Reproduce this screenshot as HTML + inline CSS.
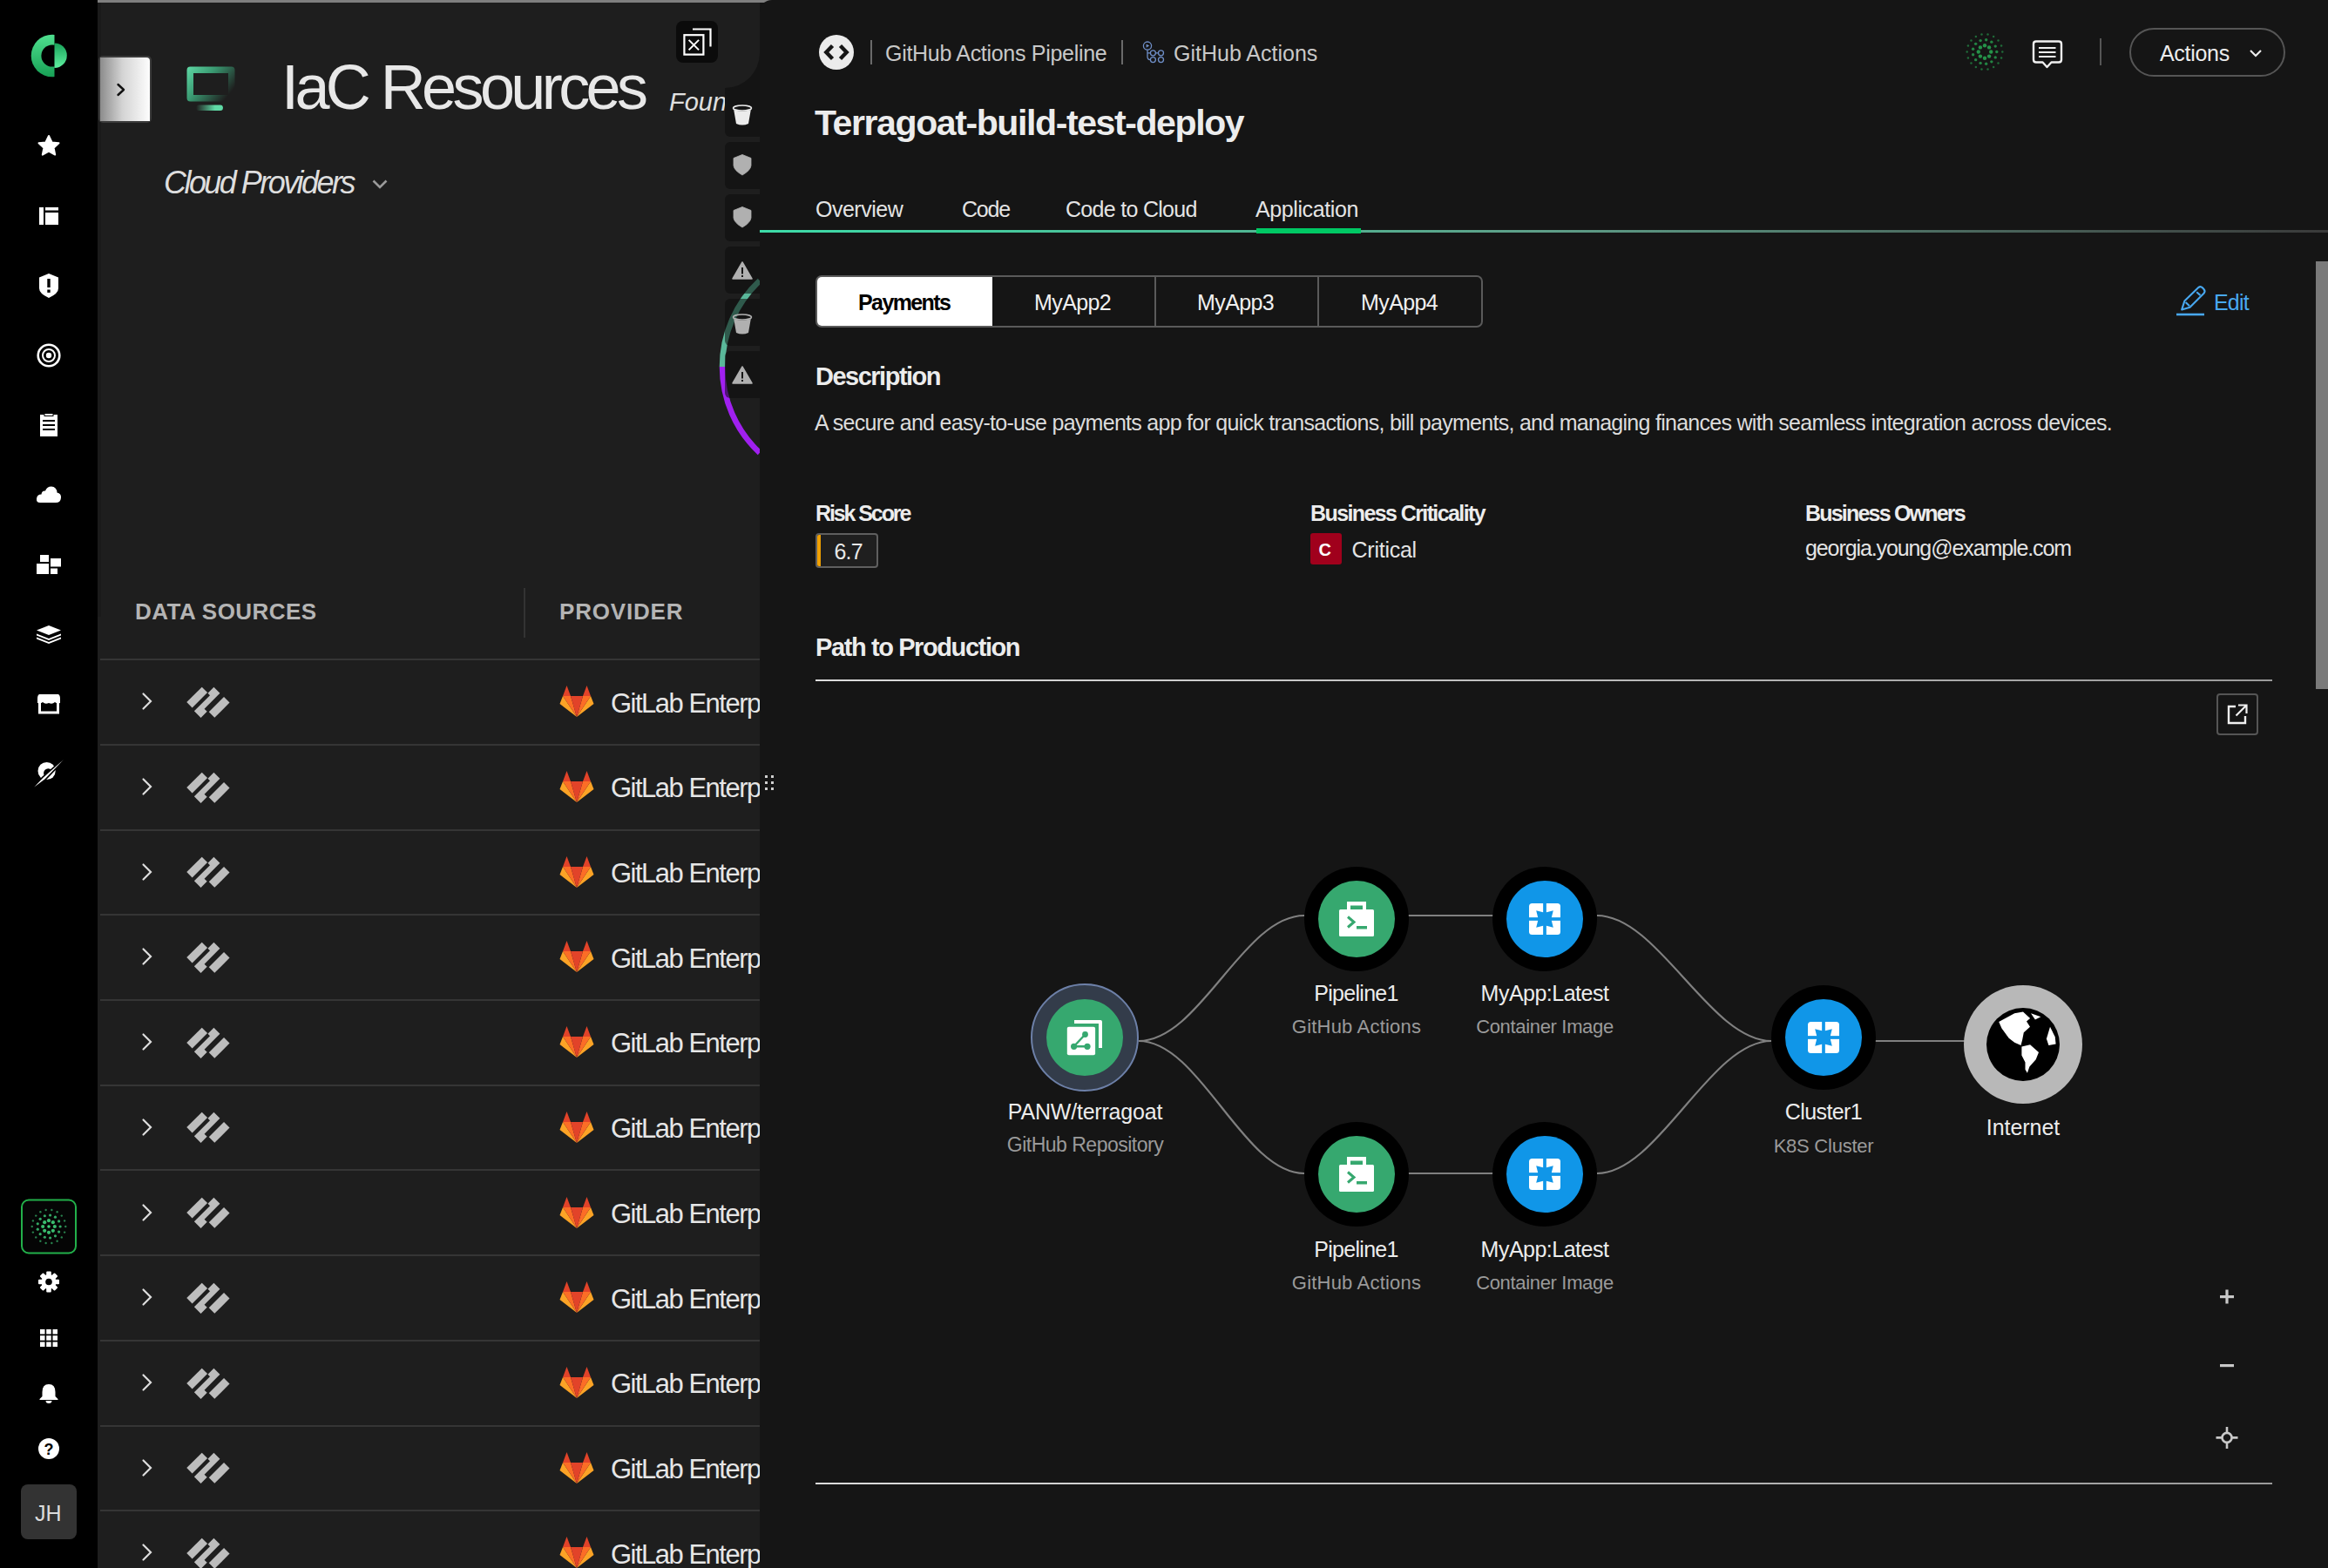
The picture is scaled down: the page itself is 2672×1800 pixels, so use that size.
<!DOCTYPE html>
<html><head><meta charset="utf-8">
<style>
*{box-sizing:border-box;margin:0;padding:0}
html,body{width:2672px;height:1800px;overflow:hidden;background:#151515}
body{position:relative;font-family:"Liberation Sans",sans-serif;color:#e6e6e6}
.a{position:absolute}
.t{position:absolute;white-space:nowrap;line-height:1;font-family:"Liberation Sans",sans-serif}
#side{left:0;top:0;width:112px;height:1800px;background:#000}
</style></head>
<body>
<!-- SIDEBAR -->
<div id="side" class="a">
  <svg class="a" style="left:0;top:0" width="112" height="1800" viewBox="0 0 112 1800">
    <defs>
      <linearGradient id="lg1" x1="0" y1="0" x2="0" y2="1"><stop offset="0" stop-color="#4fe08f"/><stop offset="1" stop-color="#17a055"/></linearGradient>
      <linearGradient id="lg2" x1="0" y1="0" x2="0" y2="1"><stop offset="0" stop-color="#18a259"/><stop offset="1" stop-color="#5ff0a0"/></linearGradient>
    </defs>
    <!-- logo -->
    <defs><clipPath id="lgc"><rect x="30" y="35" width="32.5" height="58"/></clipPath><mask id="lgm"><rect x="0" y="0" width="112" height="120" fill="#fff"/><circle cx="60" cy="64" r="12.6" fill="#000"/></mask></defs>
    <circle cx="60" cy="64" r="24.3" fill="url(#lg1)" clip-path="url(#lgc)" mask="url(#lgm)"/>
    <path d="M62.5,49.4 A14.3,14.3 0 0 1 62.5,78 Z" fill="url(#lg2)"/>
    <!-- star -->
    <path d="M56,156 L59.6,163.4 L67.5,164.3 L61.6,169.7 L63.2,177.6 L56,173.6 L48.8,177.6 L50.4,169.7 L44.5,164.3 L52.4,163.4 Z" fill="#fff" stroke="#fff" stroke-width="2" stroke-linejoin="round"/>
    <!-- layout -->
    <rect x="45" y="238" width="5" height="20" fill="#fff"/>
    <rect x="52" y="238" width="15" height="3.5" fill="#fff"/>
    <rect x="52" y="244" width="15" height="14" fill="#fff"/>
    <!-- shield ! -->
    <path d="M56,314 L67,318.5 L67,331 Q67,337 56,342 Q45,337 45,331 L45,318.5 Z" fill="#fff"/>
    <rect x="54.3" y="320" width="3.4" height="10" fill="#000"/>
    <rect x="54.3" y="332.5" width="3.4" height="3.4" fill="#000"/>
    <!-- target -->
    <circle cx="56" cy="408" r="12.3" fill="none" stroke="#fff" stroke-width="2.6"/>
    <circle cx="56" cy="408" r="7" fill="none" stroke="#fff" stroke-width="2"/>
    <circle cx="56" cy="408" r="3.2" fill="#fff"/>
    <!-- clipboard -->
    <rect x="46" y="476" width="20" height="25" fill="#fff"/>
    <rect x="51" y="474.5" width="10" height="3" fill="#fff" stroke="#000" stroke-width="1"/>
    <rect x="49" y="482" width="14" height="2" fill="#000"/>
    <rect x="49" y="487" width="14" height="2" fill="#000"/>
    <rect x="49" y="492" width="14" height="2" fill="#000"/>
    <!-- cloud -->
    <path d="M46,577 Q41.5,577 42,572.5 Q42.5,567.5 47.5,567.5 Q48,563 52,563.5 Q54,558.5 59,558.6 Q65,559 65.5,565.5 Q70.5,566.5 70,571.5 Q69.5,577 64,577 Z" fill="#fff"/>
    <!-- blocks -->
    <rect x="46" y="637" width="10" height="8" fill="#fff"/>
    <rect x="42" y="647" width="14" height="12" fill="#fff"/>
    <rect x="58" y="641" width="12" height="9.5" fill="#fff"/>
    <rect x="58" y="652.5" width="8" height="6.5" fill="#fff"/>
    <!-- layers -->
    <path d="M56,718 L70,723.5 L56,729 L42,723.5 Z" fill="#fff"/>
    <path d="M42,727.5 L56,733 L70,727.5 L70,729.5 L56,735 L42,729.5 Z" fill="#fff"/>
    <path d="M42,731.5 L56,737 L70,731.5 L70,733.5 L56,739 L42,733.5 Z" fill="#fff"/>
    <!-- store -->
    <path d="M45,797 L67,797 Q69,798 69,802 L69,807 Q65,808 63,806 Q60,809 56,807 Q52,809 49,806 Q47,808 43,807 L43,802 Q43,798 45,797 Z" fill="#fff"/>
    <rect x="44" y="806" width="3" height="13" fill="#fff"/>
    <rect x="65" y="806" width="3" height="13" fill="#fff"/>
    <rect x="44" y="816.5" width="24" height="3" fill="#fff"/>
    <!-- compass/plane -->
    <defs><clipPath id="cpul"><path d="M5.9,934.9 L106.1,841 L106.1,800 L0,800 L0,934.9 Z"/></clipPath></defs>
    <circle cx="53.6" cy="885" r="10.1" fill="#fff"/>
    <circle cx="55.4" cy="887.6" r="5.3" fill="#000" clip-path="url(#cpul)"/>
    <path d="M39.3,903.6 L49.8,892.4 L72.7,872.3 L51.6,894.3 Z" fill="#000" stroke="#000" stroke-width="3.2" stroke-linejoin="round"/>
    <path d="M39.3,903.6 L49.8,892.4 L72.7,872.3 L51.6,894.3 Z" fill="#fff"/>
    <!-- green box -->
    <rect x="25" y="1377.5" width="62" height="61" rx="8" fill="#050505" stroke="#22b04a" stroke-width="2"/>
    <g fill="#3fd07a">
      <circle cx="56" cy="1408" r="1.8"/>
    </g>
    <circle cx="62.84" cy="1408.00" r="2.09" fill="#3fd07a" opacity="0.9"/><circle cx="60.84" cy="1412.84" r="2.09" fill="#3fd07a" opacity="0.9"/><circle cx="56.00" cy="1414.84" r="2.09" fill="#3fd07a" opacity="0.9"/><circle cx="51.16" cy="1412.84" r="2.09" fill="#3fd07a" opacity="0.9"/><circle cx="49.16" cy="1408.00" r="2.09" fill="#3fd07a" opacity="0.9"/><circle cx="51.16" cy="1403.16" r="2.09" fill="#3fd07a" opacity="0.9"/><circle cx="56.00" cy="1401.16" r="2.09" fill="#3fd07a" opacity="0.9"/><circle cx="60.84" cy="1403.16" r="2.09" fill="#3fd07a" opacity="0.9"/><circle cx="69.11" cy="1408.00" r="1.61" fill="#3fd07a" opacity="0.8"/><circle cx="67.61" cy="1414.09" r="1.61" fill="#3fd07a" opacity="0.8"/><circle cx="63.45" cy="1418.79" r="1.61" fill="#3fd07a" opacity="0.8"/><circle cx="57.58" cy="1421.01" r="1.61" fill="#3fd07a" opacity="0.8"/><circle cx="51.35" cy="1420.26" r="1.61" fill="#3fd07a" opacity="0.8"/><circle cx="46.19" cy="1416.69" r="1.61" fill="#3fd07a" opacity="0.8"/><circle cx="43.27" cy="1411.14" r="1.61" fill="#3fd07a" opacity="0.8"/><circle cx="43.27" cy="1404.86" r="1.61" fill="#3fd07a" opacity="0.8"/><circle cx="46.19" cy="1399.31" r="1.61" fill="#3fd07a" opacity="0.8"/><circle cx="51.35" cy="1395.74" r="1.61" fill="#3fd07a" opacity="0.8"/><circle cx="57.58" cy="1394.99" r="1.61" fill="#3fd07a" opacity="0.8"/><circle cx="63.45" cy="1397.21" r="1.61" fill="#3fd07a" opacity="0.8"/><circle cx="67.61" cy="1401.91" r="1.61" fill="#3fd07a" opacity="0.8"/><circle cx="75.28" cy="1408.00" r="1.19" fill="#3fd07a" opacity="0.62"/><circle cx="74.12" cy="1414.60" r="1.19" fill="#3fd07a" opacity="0.62"/><circle cx="70.77" cy="1420.40" r="1.19" fill="#3fd07a" opacity="0.62"/><circle cx="65.64" cy="1424.70" r="1.19" fill="#3fd07a" opacity="0.62"/><circle cx="59.35" cy="1426.99" r="1.19" fill="#3fd07a" opacity="0.62"/><circle cx="52.65" cy="1426.99" r="1.19" fill="#3fd07a" opacity="0.62"/><circle cx="46.36" cy="1424.70" r="1.19" fill="#3fd07a" opacity="0.62"/><circle cx="41.23" cy="1420.40" r="1.19" fill="#3fd07a" opacity="0.62"/><circle cx="37.88" cy="1414.60" r="1.19" fill="#3fd07a" opacity="0.62"/><circle cx="36.72" cy="1408.00" r="1.19" fill="#3fd07a" opacity="0.62"/><circle cx="37.88" cy="1401.40" r="1.19" fill="#3fd07a" opacity="0.62"/><circle cx="41.23" cy="1395.60" r="1.19" fill="#3fd07a" opacity="0.62"/><circle cx="46.36" cy="1391.30" r="1.19" fill="#3fd07a" opacity="0.62"/><circle cx="52.65" cy="1389.01" r="1.19" fill="#3fd07a" opacity="0.62"/><circle cx="59.35" cy="1389.01" r="1.19" fill="#3fd07a" opacity="0.62"/><circle cx="65.64" cy="1391.30" r="1.19" fill="#3fd07a" opacity="0.62"/><circle cx="70.77" cy="1395.60" r="1.19" fill="#3fd07a" opacity="0.62"/><circle cx="74.12" cy="1401.40" r="1.19" fill="#3fd07a" opacity="0.62"/>
    <!-- gear -->
    <g transform="translate(56,1471.5)" fill="#fff">
      <circle r="8.5"/>
      <rect x="-2.8" y="-12" width="5.6" height="24" rx="1"/>
      <rect x="-2.8" y="-12" width="5.6" height="24" rx="1" transform="rotate(45)"/>
      <rect x="-2.8" y="-12" width="5.6" height="24" rx="1" transform="rotate(90)"/>
      <rect x="-2.8" y="-12" width="5.6" height="24" rx="1" transform="rotate(135)"/>
      <circle r="3.8" fill="#000"/>
    </g>
    <!-- grid -->
    <g fill="#fff">
      <rect x="46" y="1526" width="5.5" height="5.5"/><rect x="53.2" y="1526" width="5.5" height="5.5"/><rect x="60.5" y="1526" width="5.5" height="5.5"/>
      <rect x="46" y="1533.2" width="5.5" height="5.5"/><rect x="53.2" y="1533.2" width="5.5" height="5.5"/><rect x="60.5" y="1533.2" width="5.5" height="5.5"/>
      <rect x="46" y="1540.5" width="5.5" height="5.5"/><rect x="53.2" y="1540.5" width="5.5" height="5.5"/><rect x="60.5" y="1540.5" width="5.5" height="5.5"/>
    </g>
    <!-- bell -->
    <path d="M56,1589 Q63.5,1589 63.5,1598 L63.5,1603 L66.5,1606 L66.5,1607 L45.5,1607 L45.5,1606 L48.5,1603 L48.5,1598 Q48.5,1589 56,1589 Z" fill="#fff"/>
    <path d="M52.5,1608 A3.5,3 0 0 0 59.5,1608 Z" fill="#fff"/>
    <!-- help -->
    <circle cx="56" cy="1663" r="12" fill="#fff"/>
    <text x="56" y="1670" text-anchor="middle" font-family="Liberation Sans" font-weight="700" font-size="18" fill="#000">?</text>
    <!-- JH -->
    <rect x="24" y="1704" width="64" height="63" rx="8" fill="#333"/>
  </svg>
  <div class="t" style="left:40px;top:1724.5px;font-size:25px;color:#dcdcdc">JH</div>
</div>

<!-- LEFT PANEL -->
<div class="a" style="left:112px;top:0;width:760px;height:1800px;background:#1e1e1e"></div>
<div class="a" style="left:112px;top:0;width:4px;height:708px;background:#1a1a1a"></div>
<div class="a" style="left:112px;top:0;width:775px;height:3px;background:#7f7f7f"></div>
<div class="a" style="left:113px;top:64px;width:61px;height:77px;background:#3a3a3a;border-radius:5px"></div>
<div class="a" style="left:115px;top:66px;width:57px;height:73px;background:linear-gradient(90deg,#8c8c8c,#d4d4d4 45%,#fdfdfd);border-top-right-radius:4px"></div>
<svg class="a" style="left:115px;top:66px" width="57" height="73"><path d="M20.5,31 L27,37 L20.5,43" fill="none" stroke="#111" stroke-width="2.4" stroke-linecap="round" stroke-linejoin="round"/></svg>
<svg class="a" style="left:210px;top:72px" width="66" height="60">
<defs>
<linearGradient id="mg1" x1="0" y1="0" x2="1" y2="0.6"><stop offset="0" stop-color="#5fd9a5"/><stop offset="0.45" stop-color="#3a9a72"/><stop offset="1" stop-color="#1e1e1e"/></linearGradient>
<linearGradient id="mg2" x1="0" y1="0" x2="1" y2="0"><stop offset="0" stop-color="#1e1e1e"/><stop offset="0.7" stop-color="#5fd9a5"/><stop offset="1" stop-color="#5fd9a5"/></linearGradient>
</defs>
<path d="M8.5,4.5 L55.5,4.5 Q59.5,4.5 59.5,8.5 L59.5,40.5 Q59.5,44.5 55.5,44.5 L8.5,44.5 Q4.5,44.5 4.5,40.5 L4.5,8.5 Q4.5,4.5 8.5,4.5 Z M12,12 L12,37 L52,37 L52,12 Z" fill="url(#mg1)" fill-rule="evenodd"/>
<rect x="15" y="48.5" width="31" height="6.5" rx="3.25" fill="url(#mg2)"/>
</svg>
<div class="t" style="left:323px;top:64px;font-size:72px;color:#e8e8e8;letter-spacing:-4.6px">IaC Resources</div>
<div class="t" style="left:768px;top:103px;font-size:29px;font-style:italic;color:#e0e0e0">Found</div>
<div class="a" style="left:776px;top:24px;width:48px;height:48px;background:#0b0b0b;border-radius:8px"></div>
<svg class="a" style="left:776px;top:24px" width="48" height="48"><rect x="9.4" y="16.2" width="22" height="22.4" fill="none" stroke="#fff" stroke-width="2.2"/><path d="M14.6,21.9 L26.1,33.4 M26.1,21.9 L14.6,33.4" stroke="#fff" stroke-width="2"/><path d="M19,9.5 L39.5,9.5 L39.5,29.5" fill="none" stroke="#fff" stroke-width="2.2"/></svg>
<div class="t" style="left:188px;top:191.5px;font-size:36px;font-style:italic;color:#dedede;letter-spacing:-2.55px">Cloud Providers</div>
<svg class="a" style="left:424px;top:200px" width="26" height="22"><path d="M4.5,7.5 L12,15 L19.5,7.5" fill="none" stroke="#9a9a9a" stroke-width="2.6"/></svg>
<div class="t" style="left:155px;top:688.5px;font-size:26px;font-weight:700;color:#b4b4b4;letter-spacing:0.45px">DATA SOURCES</div>
<div class="t" style="left:642px;top:688.5px;font-size:26px;font-weight:700;color:#b4b4b4;letter-spacing:0.8px">PROVIDER</div>
<div class="a" style="left:601px;top:675px;width:2px;height:57px;background:#333"></div>
<div class="a" style="left:115px;top:756px;width:760px;height:2px;background:#353535"></div>
<div class="a" style="left:115px;top:854px;width:760px;height:2px;background:#353535"></div>
<div class="a" style="left:115px;top:952px;width:760px;height:2px;background:#353535"></div>
<div class="a" style="left:115px;top:1049px;width:760px;height:2px;background:#353535"></div>
<div class="a" style="left:115px;top:1147px;width:760px;height:2px;background:#353535"></div>
<div class="a" style="left:115px;top:1245px;width:760px;height:2px;background:#353535"></div>
<div class="a" style="left:115px;top:1342px;width:760px;height:2px;background:#353535"></div>
<div class="a" style="left:115px;top:1440px;width:760px;height:2px;background:#353535"></div>
<div class="a" style="left:115px;top:1538px;width:760px;height:2px;background:#353535"></div>
<div class="a" style="left:115px;top:1636px;width:760px;height:2px;background:#353535"></div>
<div class="a" style="left:115px;top:1733px;width:760px;height:2px;background:#353535"></div>
<svg class="a" style="left:160px;top:793.4px" width="20" height="24"><path d="M4.5,3.5 L13,12 L4.5,20.5" fill="none" stroke="#dddddd" stroke-width="2.2" stroke-linecap="round"/></svg>
<svg class="a" style="left:200px;top:780.0px" width="70" height="50" viewBox="200 780 70 50"><g transform="rotate(-45)" fill="#bdbdbd"><rect x="-418.5" y="721.5" width="24.7" height="9"/><path d="M-419.6,734.8 L-394,734.8 L-394,731.3 L-384.2,731.3 L-384.2,741.2 L-409.5,741.2 L-409.5,745.6 L-419.6,745.6 Z"/><rect x="-408.4" y="747.5" width="24.4" height="9.2"/></g></svg>
<svg class="a" style="left:641.5px;top:787.4px" width="40" height="37"><path d="M20,36 L0.5,21 L4,12 Z" fill="#fca326"/><path d="M20,36 L39.5,21 L36,12 Z" fill="#fca326"/>
<path d="M20,36 L4,12 L13,12 Z" fill="#fc6d26"/><path d="M20,36 L36,12 L27,12 Z" fill="#fc6d26"/>
<path d="M20,36 L13,12 L27,12 Z" fill="#e24329"/>
<path d="M4,12 L8.5,0 L13,12 Z" fill="#e24329"/><path d="M36,12 L31.5,0 L27,12 Z" fill="#e24329"/></svg>
<div class="t" style="left:701px;top:791.6px;font-size:31px;color:#e6e6e6;letter-spacing:-1.5px">GitLab Enterprise</div>
<svg class="a" style="left:160px;top:891.1px" width="20" height="24"><path d="M4.5,3.5 L13,12 L4.5,20.5" fill="none" stroke="#dddddd" stroke-width="2.2" stroke-linecap="round"/></svg>
<svg class="a" style="left:200px;top:877.8px" width="70" height="50" viewBox="200 780 70 50"><g transform="rotate(-45)" fill="#bdbdbd"><rect x="-418.5" y="721.5" width="24.7" height="9"/><path d="M-419.6,734.8 L-394,734.8 L-394,731.3 L-384.2,731.3 L-384.2,741.2 L-409.5,741.2 L-409.5,745.6 L-419.6,745.6 Z"/><rect x="-408.4" y="747.5" width="24.4" height="9.2"/></g></svg>
<svg class="a" style="left:641.5px;top:885.1px" width="40" height="37"><path d="M20,36 L0.5,21 L4,12 Z" fill="#fca326"/><path d="M20,36 L39.5,21 L36,12 Z" fill="#fca326"/>
<path d="M20,36 L4,12 L13,12 Z" fill="#fc6d26"/><path d="M20,36 L36,12 L27,12 Z" fill="#fc6d26"/>
<path d="M20,36 L13,12 L27,12 Z" fill="#e24329"/>
<path d="M4,12 L8.5,0 L13,12 Z" fill="#e24329"/><path d="M36,12 L31.5,0 L27,12 Z" fill="#e24329"/></svg>
<div class="t" style="left:701px;top:889.4px;font-size:31px;color:#e6e6e6;letter-spacing:-1.5px">GitLab Enterprise</div>
<svg class="a" style="left:160px;top:988.8px" width="20" height="24"><path d="M4.5,3.5 L13,12 L4.5,20.5" fill="none" stroke="#dddddd" stroke-width="2.2" stroke-linecap="round"/></svg>
<svg class="a" style="left:200px;top:975.4px" width="70" height="50" viewBox="200 780 70 50"><g transform="rotate(-45)" fill="#bdbdbd"><rect x="-418.5" y="721.5" width="24.7" height="9"/><path d="M-419.6,734.8 L-394,734.8 L-394,731.3 L-384.2,731.3 L-384.2,741.2 L-409.5,741.2 L-409.5,745.6 L-419.6,745.6 Z"/><rect x="-408.4" y="747.5" width="24.4" height="9.2"/></g></svg>
<svg class="a" style="left:641.5px;top:982.8px" width="40" height="37"><path d="M20,36 L0.5,21 L4,12 Z" fill="#fca326"/><path d="M20,36 L39.5,21 L36,12 Z" fill="#fca326"/>
<path d="M20,36 L4,12 L13,12 Z" fill="#fc6d26"/><path d="M20,36 L36,12 L27,12 Z" fill="#fc6d26"/>
<path d="M20,36 L13,12 L27,12 Z" fill="#e24329"/>
<path d="M4,12 L8.5,0 L13,12 Z" fill="#e24329"/><path d="M36,12 L31.5,0 L27,12 Z" fill="#e24329"/></svg>
<div class="t" style="left:701px;top:987.0px;font-size:31px;color:#e6e6e6;letter-spacing:-1.5px">GitLab Enterprise</div>
<svg class="a" style="left:160px;top:1086.4px" width="20" height="24"><path d="M4.5,3.5 L13,12 L4.5,20.5" fill="none" stroke="#dddddd" stroke-width="2.2" stroke-linecap="round"/></svg>
<svg class="a" style="left:200px;top:1073.1px" width="70" height="50" viewBox="200 780 70 50"><g transform="rotate(-45)" fill="#bdbdbd"><rect x="-418.5" y="721.5" width="24.7" height="9"/><path d="M-419.6,734.8 L-394,734.8 L-394,731.3 L-384.2,731.3 L-384.2,741.2 L-409.5,741.2 L-409.5,745.6 L-419.6,745.6 Z"/><rect x="-408.4" y="747.5" width="24.4" height="9.2"/></g></svg>
<svg class="a" style="left:641.5px;top:1080.4px" width="40" height="37"><path d="M20,36 L0.5,21 L4,12 Z" fill="#fca326"/><path d="M20,36 L39.5,21 L36,12 Z" fill="#fca326"/>
<path d="M20,36 L4,12 L13,12 Z" fill="#fc6d26"/><path d="M20,36 L36,12 L27,12 Z" fill="#fc6d26"/>
<path d="M20,36 L13,12 L27,12 Z" fill="#e24329"/>
<path d="M4,12 L8.5,0 L13,12 Z" fill="#e24329"/><path d="M36,12 L31.5,0 L27,12 Z" fill="#e24329"/></svg>
<div class="t" style="left:701px;top:1084.7px;font-size:31px;color:#e6e6e6;letter-spacing:-1.5px">GitLab Enterprise</div>
<svg class="a" style="left:160px;top:1184.1px" width="20" height="24"><path d="M4.5,3.5 L13,12 L4.5,20.5" fill="none" stroke="#dddddd" stroke-width="2.2" stroke-linecap="round"/></svg>
<svg class="a" style="left:200px;top:1170.8px" width="70" height="50" viewBox="200 780 70 50"><g transform="rotate(-45)" fill="#bdbdbd"><rect x="-418.5" y="721.5" width="24.7" height="9"/><path d="M-419.6,734.8 L-394,734.8 L-394,731.3 L-384.2,731.3 L-384.2,741.2 L-409.5,741.2 L-409.5,745.6 L-419.6,745.6 Z"/><rect x="-408.4" y="747.5" width="24.4" height="9.2"/></g></svg>
<svg class="a" style="left:641.5px;top:1178.1px" width="40" height="37"><path d="M20,36 L0.5,21 L4,12 Z" fill="#fca326"/><path d="M20,36 L39.5,21 L36,12 Z" fill="#fca326"/>
<path d="M20,36 L4,12 L13,12 Z" fill="#fc6d26"/><path d="M20,36 L36,12 L27,12 Z" fill="#fc6d26"/>
<path d="M20,36 L13,12 L27,12 Z" fill="#e24329"/>
<path d="M4,12 L8.5,0 L13,12 Z" fill="#e24329"/><path d="M36,12 L31.5,0 L27,12 Z" fill="#e24329"/></svg>
<div class="t" style="left:701px;top:1182.4px;font-size:31px;color:#e6e6e6;letter-spacing:-1.5px">GitLab Enterprise</div>
<svg class="a" style="left:160px;top:1281.8px" width="20" height="24"><path d="M4.5,3.5 L13,12 L4.5,20.5" fill="none" stroke="#dddddd" stroke-width="2.2" stroke-linecap="round"/></svg>
<svg class="a" style="left:200px;top:1268.4px" width="70" height="50" viewBox="200 780 70 50"><g transform="rotate(-45)" fill="#bdbdbd"><rect x="-418.5" y="721.5" width="24.7" height="9"/><path d="M-419.6,734.8 L-394,734.8 L-394,731.3 L-384.2,731.3 L-384.2,741.2 L-409.5,741.2 L-409.5,745.6 L-419.6,745.6 Z"/><rect x="-408.4" y="747.5" width="24.4" height="9.2"/></g></svg>
<svg class="a" style="left:641.5px;top:1275.8px" width="40" height="37"><path d="M20,36 L0.5,21 L4,12 Z" fill="#fca326"/><path d="M20,36 L39.5,21 L36,12 Z" fill="#fca326"/>
<path d="M20,36 L4,12 L13,12 Z" fill="#fc6d26"/><path d="M20,36 L36,12 L27,12 Z" fill="#fc6d26"/>
<path d="M20,36 L13,12 L27,12 Z" fill="#e24329"/>
<path d="M4,12 L8.5,0 L13,12 Z" fill="#e24329"/><path d="M36,12 L31.5,0 L27,12 Z" fill="#e24329"/></svg>
<div class="t" style="left:701px;top:1280.1px;font-size:31px;color:#e6e6e6;letter-spacing:-1.5px">GitLab Enterprise</div>
<svg class="a" style="left:160px;top:1379.5px" width="20" height="24"><path d="M4.5,3.5 L13,12 L4.5,20.5" fill="none" stroke="#dddddd" stroke-width="2.2" stroke-linecap="round"/></svg>
<svg class="a" style="left:200px;top:1366.2px" width="70" height="50" viewBox="200 780 70 50"><g transform="rotate(-45)" fill="#bdbdbd"><rect x="-418.5" y="721.5" width="24.7" height="9"/><path d="M-419.6,734.8 L-394,734.8 L-394,731.3 L-384.2,731.3 L-384.2,741.2 L-409.5,741.2 L-409.5,745.6 L-419.6,745.6 Z"/><rect x="-408.4" y="747.5" width="24.4" height="9.2"/></g></svg>
<svg class="a" style="left:641.5px;top:1373.5px" width="40" height="37"><path d="M20,36 L0.5,21 L4,12 Z" fill="#fca326"/><path d="M20,36 L39.5,21 L36,12 Z" fill="#fca326"/>
<path d="M20,36 L4,12 L13,12 Z" fill="#fc6d26"/><path d="M20,36 L36,12 L27,12 Z" fill="#fc6d26"/>
<path d="M20,36 L13,12 L27,12 Z" fill="#e24329"/>
<path d="M4,12 L8.5,0 L13,12 Z" fill="#e24329"/><path d="M36,12 L31.5,0 L27,12 Z" fill="#e24329"/></svg>
<div class="t" style="left:701px;top:1377.8px;font-size:31px;color:#e6e6e6;letter-spacing:-1.5px">GitLab Enterprise</div>
<svg class="a" style="left:160px;top:1477.2px" width="20" height="24"><path d="M4.5,3.5 L13,12 L4.5,20.5" fill="none" stroke="#dddddd" stroke-width="2.2" stroke-linecap="round"/></svg>
<svg class="a" style="left:200px;top:1463.8px" width="70" height="50" viewBox="200 780 70 50"><g transform="rotate(-45)" fill="#bdbdbd"><rect x="-418.5" y="721.5" width="24.7" height="9"/><path d="M-419.6,734.8 L-394,734.8 L-394,731.3 L-384.2,731.3 L-384.2,741.2 L-409.5,741.2 L-409.5,745.6 L-419.6,745.6 Z"/><rect x="-408.4" y="747.5" width="24.4" height="9.2"/></g></svg>
<svg class="a" style="left:641.5px;top:1471.2px" width="40" height="37"><path d="M20,36 L0.5,21 L4,12 Z" fill="#fca326"/><path d="M20,36 L39.5,21 L36,12 Z" fill="#fca326"/>
<path d="M20,36 L4,12 L13,12 Z" fill="#fc6d26"/><path d="M20,36 L36,12 L27,12 Z" fill="#fc6d26"/>
<path d="M20,36 L13,12 L27,12 Z" fill="#e24329"/>
<path d="M4,12 L8.5,0 L13,12 Z" fill="#e24329"/><path d="M36,12 L31.5,0 L27,12 Z" fill="#e24329"/></svg>
<div class="t" style="left:701px;top:1475.5px;font-size:31px;color:#e6e6e6;letter-spacing:-1.5px">GitLab Enterprise</div>
<svg class="a" style="left:160px;top:1574.9px" width="20" height="24"><path d="M4.5,3.5 L13,12 L4.5,20.5" fill="none" stroke="#dddddd" stroke-width="2.2" stroke-linecap="round"/></svg>
<svg class="a" style="left:200px;top:1561.6px" width="70" height="50" viewBox="200 780 70 50"><g transform="rotate(-45)" fill="#bdbdbd"><rect x="-418.5" y="721.5" width="24.7" height="9"/><path d="M-419.6,734.8 L-394,734.8 L-394,731.3 L-384.2,731.3 L-384.2,741.2 L-409.5,741.2 L-409.5,745.6 L-419.6,745.6 Z"/><rect x="-408.4" y="747.5" width="24.4" height="9.2"/></g></svg>
<svg class="a" style="left:641.5px;top:1568.9px" width="40" height="37"><path d="M20,36 L0.5,21 L4,12 Z" fill="#fca326"/><path d="M20,36 L39.5,21 L36,12 Z" fill="#fca326"/>
<path d="M20,36 L4,12 L13,12 Z" fill="#fc6d26"/><path d="M20,36 L36,12 L27,12 Z" fill="#fc6d26"/>
<path d="M20,36 L13,12 L27,12 Z" fill="#e24329"/>
<path d="M4,12 L8.5,0 L13,12 Z" fill="#e24329"/><path d="M36,12 L31.5,0 L27,12 Z" fill="#e24329"/></svg>
<div class="t" style="left:701px;top:1573.2px;font-size:31px;color:#e6e6e6;letter-spacing:-1.5px">GitLab Enterprise</div>
<svg class="a" style="left:160px;top:1672.7px" width="20" height="24"><path d="M4.5,3.5 L13,12 L4.5,20.5" fill="none" stroke="#dddddd" stroke-width="2.2" stroke-linecap="round"/></svg>
<svg class="a" style="left:200px;top:1659.3px" width="70" height="50" viewBox="200 780 70 50"><g transform="rotate(-45)" fill="#bdbdbd"><rect x="-418.5" y="721.5" width="24.7" height="9"/><path d="M-419.6,734.8 L-394,734.8 L-394,731.3 L-384.2,731.3 L-384.2,741.2 L-409.5,741.2 L-409.5,745.6 L-419.6,745.6 Z"/><rect x="-408.4" y="747.5" width="24.4" height="9.2"/></g></svg>
<svg class="a" style="left:641.5px;top:1666.7px" width="40" height="37"><path d="M20,36 L0.5,21 L4,12 Z" fill="#fca326"/><path d="M20,36 L39.5,21 L36,12 Z" fill="#fca326"/>
<path d="M20,36 L4,12 L13,12 Z" fill="#fc6d26"/><path d="M20,36 L36,12 L27,12 Z" fill="#fc6d26"/>
<path d="M20,36 L13,12 L27,12 Z" fill="#e24329"/>
<path d="M4,12 L8.5,0 L13,12 Z" fill="#e24329"/><path d="M36,12 L31.5,0 L27,12 Z" fill="#e24329"/></svg>
<div class="t" style="left:701px;top:1671.0px;font-size:31px;color:#e6e6e6;letter-spacing:-1.5px">GitLab Enterprise</div>
<svg class="a" style="left:160px;top:1770.3px" width="20" height="24"><path d="M4.5,3.5 L13,12 L4.5,20.5" fill="none" stroke="#dddddd" stroke-width="2.2" stroke-linecap="round"/></svg>
<svg class="a" style="left:200px;top:1756.9px" width="70" height="50" viewBox="200 780 70 50"><g transform="rotate(-45)" fill="#bdbdbd"><rect x="-418.5" y="721.5" width="24.7" height="9"/><path d="M-419.6,734.8 L-394,734.8 L-394,731.3 L-384.2,731.3 L-384.2,741.2 L-409.5,741.2 L-409.5,745.6 L-419.6,745.6 Z"/><rect x="-408.4" y="747.5" width="24.4" height="9.2"/></g></svg>
<svg class="a" style="left:641.5px;top:1764.3px" width="40" height="37"><path d="M20,36 L0.5,21 L4,12 Z" fill="#fca326"/><path d="M20,36 L39.5,21 L36,12 Z" fill="#fca326"/>
<path d="M20,36 L4,12 L13,12 Z" fill="#fc6d26"/><path d="M20,36 L36,12 L27,12 Z" fill="#fc6d26"/>
<path d="M20,36 L13,12 L27,12 Z" fill="#e24329"/>
<path d="M4,12 L8.5,0 L13,12 Z" fill="#e24329"/><path d="M36,12 L31.5,0 L27,12 Z" fill="#e24329"/></svg>
<div class="t" style="left:701px;top:1768.6px;font-size:31px;color:#e6e6e6;letter-spacing:-1.5px">GitLab Enterprise</div>
<div class="a" style="left:832px;top:56px;width:40px;height:52px;background:#141414"></div>
<div class="a" style="left:832px;top:0px;width:40px;height:101px;background:#1e1e1e;border-bottom-right-radius:40px"></div>
<div class="a" style="left:832px;top:0px;width:40px;height:3px;background:#7f7f7f"></div>
<svg class="a" style="left:780px;top:260px" width="92" height="300"><path d="M 92,62.2 A 135,135 0 0 0 49,161" fill="none" stroke="#5ab89a" stroke-width="6.5"/><path d="M 49,161 A 135,135 0 0 0 92,259.8" fill="none" stroke="#a020f0" stroke-width="6.5"/></svg>
<div class="a" style="left:832px;top:102.8px;width:40px;height:54px;background:#141414;border-top-left-radius:6px;border-bottom-left-radius:6px"></div>
<div class="a" style="left:832px;top:162.8px;width:40px;height:54px;background:#141414;border-top-left-radius:6px;border-bottom-left-radius:6px"></div>
<div class="a" style="left:832px;top:222.8px;width:40px;height:54px;background:#141414;border-top-left-radius:6px;border-bottom-left-radius:6px"></div>
<div class="a" style="left:832px;top:282.8px;width:40px;height:54px;background:rgba(12,12,12,0.55);border-top-left-radius:6px;border-bottom-left-radius:6px"></div>
<div class="a" style="left:832px;top:342.8px;width:40px;height:54px;background:rgba(12,12,12,0.55);border-top-left-radius:6px;border-bottom-left-radius:6px"></div>
<div class="a" style="left:832px;top:402.8px;width:40px;height:54px;background:rgba(12,12,12,0.55);border-top-left-radius:6px;border-bottom-left-radius:6px"></div>
<svg class="a" style="left:840px;top:120px" width="24" height="25"><ellipse cx="12" cy="4" rx="10.5" ry="3" fill="none" stroke="#ececec" stroke-width="1.6"/><path d="M2.2,6 L5,22 Q12,25 19,22 L21.8,6 Q12,9.5 2.2,6 Z" fill="#ececec"/></svg>
<svg class="a" style="left:841px;top:177px" width="22" height="25"><path d="M11,0.5 L21,4.5 L21,13 Q20.5,18.5 11,24 Q1.5,18.5 1,13 L1,4.5 Z" fill="#b0b0b0" stroke="#b0b0b0" stroke-linejoin="round" stroke-width="0.8"/></svg>
<svg class="a" style="left:841px;top:237px" width="22" height="25"><path d="M11,0.5 L21,4.5 L21,13 Q20.5,18.5 11,24 Q1.5,18.5 1,13 L1,4.5 Z" fill="#b0b0b0" stroke="#b0b0b0" stroke-linejoin="round" stroke-width="0.8"/></svg>
<svg class="a" style="left:840px;top:300px" width="24" height="21"><path d="M12,1 L23,20 L1,20 Z" fill="#b0b0b0" stroke="#b0b0b0" stroke-linejoin="round" stroke-width="1.5"/><rect x="11" y="7" width="2" height="7.5" fill="#161616"/><rect x="11" y="16" width="2" height="2" fill="#161616"/></svg>
<svg class="a" style="left:840px;top:360px" width="24" height="25"><ellipse cx="12" cy="4" rx="10.5" ry="3" fill="none" stroke="#b0b0b0" stroke-width="1.6"/><path d="M2.2,6 L5,22 Q12,25 19,22 L21.8,6 Q12,9.5 2.2,6 Z" fill="#b0b0b0"/></svg>
<svg class="a" style="left:840px;top:420px" width="24" height="21"><path d="M12,1 L23,20 L1,20 Z" fill="#b0b0b0" stroke="#b0b0b0" stroke-linejoin="round" stroke-width="1.5"/><rect x="11" y="7" width="2" height="7.5" fill="#161616"/><rect x="11" y="16" width="2" height="2" fill="#161616"/></svg>
<!-- DRAWER -->
<div class="a" style="left:872px;top:0;width:1800px;height:1800px;background:#151515;border-top-left-radius:14px"></div>
<svg class="a" style="left:940px;top:40px" width="40" height="40"><circle cx="20" cy="20" r="20" fill="#ebebeb"/><path d="M15.5,12.5 L8.3,20 L15.5,27.5 M24.5,12.5 L31.7,20 L24.5,27.5" fill="none" stroke="#151515" stroke-width="4.4"/></svg>
<div class="a" style="left:999px;top:46px;width:2px;height:28px;background:#6a6a6a"></div>
<div class="t" style="left:1016px;top:48.8px;font-size:25px;color:#c8c8c8;font-weight:400;letter-spacing:-0.3px;font-style:normal;">GitHub Actions Pipeline</div>
<div class="a" style="left:1287px;top:46px;width:2px;height:28px;background:#6a6a6a"></div>
<svg class="a" style="left:1308px;top:44px" width="32" height="32"><g fill="none" stroke="#6f8fc8" stroke-width="1.3"><circle cx="9" cy="8.6" r="4.6"/><circle cx="15.4" cy="16.8" r="3"/><circle cx="24.5" cy="16.8" r="3"/><circle cx="15.4" cy="24.6" r="3"/><circle cx="24.5" cy="24.6" r="3"/><path d="M9,13.2 L9,21 Q9,24.6 12.4,24.6 M9,16.8 L12.4,16.8 M18.4,16.8 L21.5,16.8"/></g><path d="M7.6,6.4 L11.2,8.6 L7.6,10.8 Z" fill="#6f8fc8"/></svg>
<div class="t" style="left:1347px;top:48.8px;font-size:25px;color:#c8c8c8;font-weight:400;letter-spacing:0px;font-style:normal;">GitHub Actions</div>
<svg class="a" style="left:2250px;top:32px" width="56" height="56"><circle cx="35.20" cy="27.50" r="2.20" fill="#27a04f" opacity="0.9"/><circle cx="33.09" cy="32.59" r="2.20" fill="#27a04f" opacity="0.9"/><circle cx="28.00" cy="34.70" r="2.20" fill="#27a04f" opacity="0.9"/><circle cx="22.91" cy="32.59" r="2.20" fill="#27a04f" opacity="0.9"/><circle cx="20.80" cy="27.50" r="2.20" fill="#27a04f" opacity="0.9"/><circle cx="22.91" cy="22.41" r="2.20" fill="#27a04f" opacity="0.9"/><circle cx="28.00" cy="20.30" r="2.20" fill="#27a04f" opacity="0.9"/><circle cx="33.09" cy="22.41" r="2.20" fill="#27a04f" opacity="0.9"/><circle cx="41.80" cy="27.50" r="1.70" fill="#27a04f" opacity="0.8"/><circle cx="40.22" cy="33.91" r="1.70" fill="#27a04f" opacity="0.8"/><circle cx="35.84" cy="38.86" r="1.70" fill="#27a04f" opacity="0.8"/><circle cx="29.66" cy="41.20" r="1.70" fill="#27a04f" opacity="0.8"/><circle cx="23.11" cy="40.40" r="1.70" fill="#27a04f" opacity="0.8"/><circle cx="17.67" cy="36.65" r="1.70" fill="#27a04f" opacity="0.8"/><circle cx="14.60" cy="30.80" r="1.70" fill="#27a04f" opacity="0.8"/><circle cx="14.60" cy="24.20" r="1.70" fill="#27a04f" opacity="0.8"/><circle cx="17.67" cy="18.35" r="1.70" fill="#27a04f" opacity="0.8"/><circle cx="23.11" cy="14.60" r="1.70" fill="#27a04f" opacity="0.8"/><circle cx="29.66" cy="13.80" r="1.70" fill="#27a04f" opacity="0.8"/><circle cx="35.84" cy="16.14" r="1.70" fill="#27a04f" opacity="0.8"/><circle cx="40.22" cy="21.09" r="1.70" fill="#27a04f" opacity="0.8"/><circle cx="48.30" cy="27.50" r="1.25" fill="#27a04f" opacity="0.62"/><circle cx="47.08" cy="34.44" r="1.25" fill="#27a04f" opacity="0.62"/><circle cx="43.55" cy="40.55" r="1.25" fill="#27a04f" opacity="0.62"/><circle cx="38.15" cy="45.08" r="1.25" fill="#27a04f" opacity="0.62"/><circle cx="31.53" cy="47.49" r="1.25" fill="#27a04f" opacity="0.62"/><circle cx="24.47" cy="47.49" r="1.25" fill="#27a04f" opacity="0.62"/><circle cx="17.85" cy="45.08" r="1.25" fill="#27a04f" opacity="0.62"/><circle cx="12.45" cy="40.55" r="1.25" fill="#27a04f" opacity="0.62"/><circle cx="8.92" cy="34.44" r="1.25" fill="#27a04f" opacity="0.62"/><circle cx="7.70" cy="27.50" r="1.25" fill="#27a04f" opacity="0.62"/><circle cx="8.92" cy="20.56" r="1.25" fill="#27a04f" opacity="0.62"/><circle cx="12.45" cy="14.45" r="1.25" fill="#27a04f" opacity="0.62"/><circle cx="17.85" cy="9.92" r="1.25" fill="#27a04f" opacity="0.62"/><circle cx="24.47" cy="7.51" r="1.25" fill="#27a04f" opacity="0.62"/><circle cx="31.53" cy="7.51" r="1.25" fill="#27a04f" opacity="0.62"/><circle cx="38.15" cy="9.92" r="1.25" fill="#27a04f" opacity="0.62"/><circle cx="43.55" cy="14.45" r="1.25" fill="#27a04f" opacity="0.62"/><circle cx="47.08" cy="20.56" r="1.25" fill="#27a04f" opacity="0.62"/></svg>
<svg class="a" style="left:2328px;top:42px" width="44" height="40"><path d="M9,5.5 L35,5.5 Q38,5.5 38,8.5 L38,26.5 Q38,29.5 35,29.5 L26.5,29.5 L21.5,35 L16.5,29.5 L9,29.5 Q6,29.5 6,26.5 L6,8.5 Q6,5.5 9,5.5 Z" fill="none" stroke="#f0f0f0" stroke-width="2.4" stroke-linejoin="round"/><path d="M12,13 L31.5,13 M12,18 L31.5,18 M12,23 L31.5,23" stroke="#f0f0f0" stroke-width="2.2"/></svg>
<div class="a" style="left:2410px;top:44px;width:2px;height:31px;background:#555"></div>
<div class="a" style="left:2444px;top:32px;width:179px;height:56px;border:2px solid #555;border-radius:28px"></div>
<div class="t" style="left:2479px;top:49.3px;font-size:25px;color:#ececec;font-weight:400;letter-spacing:-0.3px;font-style:normal;">Actions</div>
<svg class="a" style="left:2578px;top:52px" width="22" height="18"><path d="M5,6 L11,12 L17,6" fill="none" stroke="#ececec" stroke-width="2.2"/></svg>
<div class="t" style="left:935px;top:121.0px;font-size:41px;color:#ececec;font-weight:700;letter-spacing:-1.4px;font-style:normal;">Terragoat-build-test-deploy</div>
<div class="t" style="left:936px;top:227.8px;font-size:25px;color:#e4e4e4;font-weight:400;letter-spacing:-0.5px;font-style:normal;">Overview</div>
<div class="t" style="left:1104px;top:227.8px;font-size:25px;color:#e4e4e4;font-weight:400;letter-spacing:-1.2px;font-style:normal;">Code</div>
<div class="t" style="left:1223px;top:227.8px;font-size:25px;color:#e4e4e4;font-weight:400;letter-spacing:-0.7px;font-style:normal;">Code to Cloud</div>
<div class="t" style="left:1441px;top:227.8px;font-size:25px;color:#e4e4e4;font-weight:400;letter-spacing:-0.4px;font-style:normal;">Application</div>
<div class="a" style="left:872px;top:263.5px;width:1800px;height:3px;background:linear-gradient(90deg,#3ddca8 0%,#4fb894 30%,#5e9e88 50%,#3a3a3a 100%)"></div>
<div class="a" style="left:1442px;top:262px;width:120px;height:6px;background:#00c864"></div>
<div class="a" style="left:936px;top:316px;width:766px;height:60px;border:2px solid #5a5a5a;border-radius:7px;overflow:hidden"><div class="a" style="left:0;top:0;width:201px;height:56px;background:#fff"></div><div class="a" style="left:387px;top:0;width:2px;height:56px;background:#5a5a5a"></div><div class="a" style="left:574px;top:0;width:2px;height:56px;background:#5a5a5a"></div></div>
<div class="t" style="left:985px;top:335.1px;font-size:25px;color:#000;font-weight:700;letter-spacing:-1.6px;font-style:normal;">Payments</div>
<div class="t" style="left:1187px;top:335.1px;font-size:25px;color:#f0f0f0;font-weight:400;letter-spacing:-0.6px;font-style:normal;">MyApp2</div>
<div class="t" style="left:1374px;top:335.1px;font-size:25px;color:#f0f0f0;font-weight:400;letter-spacing:-0.6px;font-style:normal;">MyApp3</div>
<div class="t" style="left:1562px;top:335.1px;font-size:25px;color:#f0f0f0;font-weight:400;letter-spacing:-0.6px;font-style:normal;">MyApp4</div>
<svg class="a" style="left:2494px;top:326px" width="40" height="40"><path d="M10.2,29.4 L13.3,19.6 L29.3,4.1 Q31.6,2 33.9,4.3 L35.5,6 Q37.6,8.3 35.5,10.8 L19.5,26.8 Z M14.6,20.9 L19,25.2 M27.2,9.3 L31.4,12.9" fill="none" stroke="#48a8f0" stroke-width="2.1" stroke-linejoin="round"/><path d="M4,35 L36,35" stroke="#48a8f0" stroke-width="2.6"/></svg>
<div class="t" style="left:2541px;top:334.5px;font-size:25px;color:#48a8f0;font-weight:400;letter-spacing:-0.8px;font-style:normal;">Edit</div>
<div class="t" style="left:936px;top:417.5px;font-size:29px;color:#ececec;font-weight:700;letter-spacing:-1.5px;font-style:normal;">Description</div>
<div class="t" style="left:935px;top:472.6px;font-size:25px;color:#dcdcdc;font-weight:400;letter-spacing:-0.72px;font-style:normal;">A secure and easy-to-use payments app for quick transactions, bill payments, and managing finances with seamless integration across devices.</div>
<div class="t" style="left:936px;top:576.8px;font-size:25px;color:#ececec;font-weight:700;letter-spacing:-2.1px;font-style:normal;">Risk Score</div>
<div class="a" style="left:936px;top:612px;width:72px;height:40px;border:2px solid #5f5f5f;border-radius:4px;background:#1f1f1f;overflow:hidden"><div class="a" style="left:0;top:0;width:4px;height:36px;background:#f0a000"></div></div>
<div class="t" style="left:957.5px;top:620.6px;font-size:25px;color:#e8e8e8;font-weight:400;letter-spacing:-0.8px;font-style:normal;">6.7</div>
<div class="t" style="left:1504px;top:576.8px;font-size:25px;color:#ececec;font-weight:700;letter-spacing:-1.6px;font-style:normal;">Business Criticality</div>
<div class="a" style="left:1504px;top:611.5px;width:36px;height:36px;background:#a0001c;border-radius:3px"></div>
<div class="t" style="left:1513.5px;top:621.1px;font-size:20px;color:#fff;font-weight:700;letter-spacing:0px;font-style:normal;">C</div>
<div class="t" style="left:1551.5px;top:619.2px;font-size:25px;color:#e4e4e4;font-weight:400;letter-spacing:-0.25px;font-style:normal;">Critical</div>
<div class="t" style="left:2072px;top:577.3px;font-size:25px;color:#ececec;font-weight:700;letter-spacing:-1.8px;font-style:normal;">Business Owners</div>
<div class="t" style="left:2072px;top:616.6px;font-size:25px;color:#e4e4e4;font-weight:400;letter-spacing:-1.1px;font-style:normal;">georgia.young@example.com</div>
<div class="t" style="left:936px;top:729.2px;font-size:29px;color:#ececec;font-weight:700;letter-spacing:-1.4px;font-style:normal;">Path to Production</div>
<div class="a" style="left:936px;top:780px;width:1672px;height:2px;background:linear-gradient(90deg,#dcdcdc,#bdbdbd 50%,#9a9a9a)"></div>
<div class="a" style="left:936px;top:1702px;width:1672px;height:2px;background:linear-gradient(90deg,#dcdcdc,#bdbdbd 50%,#9a9a9a)"></div>
<div class="a" style="left:2544px;top:796px;width:48px;height:48px;border:2px solid #555;border-radius:4px"></div>
<svg class="a" style="left:2544px;top:796px" width="48" height="48"><path d="M22,15 L14,15 L14,34 L33,34 L33,26" fill="none" stroke="#f0f0f0" stroke-width="2.4"/><path d="M25,13.5 L34.5,13.5 L34.5,23 M34.5,13.5 L22.5,25.5" fill="none" stroke="#f0f0f0" stroke-width="2.2"/></svg>
<div class="a" style="left:2658px;top:300px;width:14px;height:491px;background:#7a7a7a"></div>
<svg class="a" style="left:2530px;top:1460px" width="52" height="220"><g fill="#c8c8c8"><rect x="18" y="27" width="16" height="3.2"/><rect x="24.4" y="20.5" width="3.2" height="16"/><rect x="18" y="106" width="16" height="3.2"/></g><circle cx="26" cy="190.4" r="5.5" fill="none" stroke="#c8c8c8" stroke-width="2.6"/><path d="M26,178 L26,185 M26,196 L26,203 M13.5,190.4 L20.5,190.4 M31.5,190.4 L38.5,190.4" stroke="#c8c8c8" stroke-width="2.6"/></svg>
<svg class="a" style="left:877px;top:889px" width="14" height="22"><rect x="1" y="1" width="3" height="3" fill="#cfcfcf"/><rect x="1" y="8" width="3" height="3" fill="#cfcfcf"/><rect x="1" y="15" width="3" height="3" fill="#cfcfcf"/><rect x="8" y="1" width="3" height="3" fill="#cfcfcf"/><rect x="8" y="8" width="3" height="3" fill="#cfcfcf"/><rect x="8" y="15" width="3" height="3" fill="#cfcfcf"/></svg>
<svg class="a" style="left:872px;top:900px" width="1800" height="620" viewBox="872 900 1800 620">
<g fill="none" stroke="#808080" stroke-width="2.2">
<path d="M1307,1195 C1377,1195 1427,1051 1497,1051"/>
<path d="M1307,1195 C1377,1195 1427,1347 1497,1347"/>
<path d="M1610,1051 L1720,1051"/>
<path d="M1610,1347 L1720,1347"/>
<path d="M1833,1051 C1903,1051 1963,1195 2033,1195"/>
<path d="M1833,1347 C1903,1347 1963,1195 2033,1195"/>
<path d="M2150,1195 L2258,1195"/>
</g>
<circle cx="1245" cy="1191" r="61" fill="#333c4a" stroke="#6d80a8" stroke-width="2"/>
<circle cx="1245" cy="1191" r="44" fill="#36a86f"/>
<path d="M1233,1171 L1263,1171 Q1265,1171 1265,1173 L1265,1203 L1261,1203 L1261,1175 L1233,1175 Z" fill="#fff"/>
<rect x="1224.8" y="1178.7" width="32.3" height="32.5" rx="2" fill="#fff"/>
<g stroke="#36a86f" stroke-width="2.4"><path d="M1232.6,1201.3 L1245.5,1187.5 M1232.6,1201.3 L1248,1201.3"/></g><g fill="#36a86f"><circle cx="1245.5" cy="1187.5" r="3.4"/><circle cx="1232.6" cy="1201.3" r="3.6"/><circle cx="1248" cy="1201.3" r="3.6"/></g>
<circle cx="1557" cy="1055" r="60" fill="#000"/><circle cx="1557" cy="1055" r="44" fill="#36a86f"/><g transform="translate(0,0)"><path d="M1546,1044 L1546,1035 L1568,1035 L1568,1044 L1564,1044 L1564,1039.5 L1550,1039.5 L1550,1044 Z" fill="#fff"/><rect x="1537" y="1044" width="40" height="31" rx="1.5" fill="#fff"/><path d="M1547,1052.5 L1554,1058.5 L1547,1064.5" fill="none" stroke="#36a86f" stroke-width="3"/><rect x="1557" y="1063" width="12" height="3.5" fill="#36a86f"/></g>
<circle cx="1557" cy="1348" r="60" fill="#000"/><circle cx="1557" cy="1348" r="44" fill="#36a86f"/><g transform="translate(0,293)"><path d="M1546,1044 L1546,1035 L1568,1035 L1568,1044 L1564,1044 L1564,1039.5 L1550,1039.5 L1550,1044 Z" fill="#fff"/><rect x="1537" y="1044" width="40" height="31" rx="1.5" fill="#fff"/><path d="M1547,1052.5 L1554,1058.5 L1547,1064.5" fill="none" stroke="#36a86f" stroke-width="3"/><rect x="1557" y="1063" width="12" height="3.5" fill="#36a86f"/></g>
<circle cx="1773" cy="1055" r="60" fill="#000"/><circle cx="1773" cy="1055" r="44" fill="#1096e8"/><g transform="translate(1773,1055)"><rect x="-18" y="-18" width="36" height="36" rx="3.5" fill="#fff"/><rect x="-1.85" y="-19" width="3.7" height="38" fill="#1096e8"/><rect x="-19" y="-1.85" width="38" height="3.7" fill="#1096e8"/><path d="M-9.8,-9.7 L0,-7.35 L9.8,-9.7 L7.35,0 L9.8,9.7 L0,7.35 L-9.8,9.7 L-7.35,0 Z" fill="#1096e8"/></g>
<circle cx="1773" cy="1348" r="60" fill="#000"/><circle cx="1773" cy="1348" r="44" fill="#1096e8"/><g transform="translate(1773,1348)"><rect x="-18" y="-18" width="36" height="36" rx="3.5" fill="#fff"/><rect x="-1.85" y="-19" width="3.7" height="38" fill="#1096e8"/><rect x="-19" y="-1.85" width="38" height="3.7" fill="#1096e8"/><path d="M-9.8,-9.7 L0,-7.35 L9.8,-9.7 L7.35,0 L9.8,9.7 L0,7.35 L-9.8,9.7 L-7.35,0 Z" fill="#1096e8"/></g>
<circle cx="2093" cy="1191" r="60" fill="#000"/><circle cx="2093" cy="1191" r="44" fill="#1096e8"/><g transform="translate(2093,1191)"><rect x="-18" y="-18" width="36" height="36" rx="3.5" fill="#fff"/><rect x="-1.85" y="-19" width="3.7" height="38" fill="#1096e8"/><rect x="-19" y="-1.85" width="38" height="3.7" fill="#1096e8"/><path d="M-9.8,-9.7 L0,-7.35 L9.8,-9.7 L7.35,0 L9.8,9.7 L0,7.35 L-9.8,9.7 L-7.35,0 Z" fill="#1096e8"/></g>
<circle cx="2322" cy="1199" r="68" fill="#b8b8b8"/><circle cx="2322" cy="1199" r="42" fill="#000"/>
<path d="M2294.2,1173 L2312.2,1163.3 L2322,1161.6 L2330.1,1169 L2326,1172.5 L2330,1178.8 L2322.8,1185.3 L2321.2,1193.5 L2319.5,1200 L2312.2,1196.7 L2305.7,1191.8 L2297.5,1180.4 Z" fill="#fff"/>
<path d="M2331,1163.3 L2342.4,1167.3 L2335.9,1170.6 Z" fill="#fff"/>
<path d="M2320.4,1201.6 L2330.1,1199.2 L2340,1208.1 L2336.7,1216.3 L2329.4,1224.5 L2326.9,1231.8 L2324.5,1227.7 L2324.5,1219.6 L2320.4,1211.4 Z" fill="#fff"/>
<path d="M2353,1178.8 L2358.7,1190.2 L2359.6,1198.4 L2351.4,1200 L2348.9,1192.6 Z" fill="#fff"/>
</svg>
<div class="t" style="left:945.5px;width:600px;text-align:center;top:1263.9px;font-size:25px;color:#ececec;letter-spacing:-0.2px">PANW/terragoat</div>
<div class="t" style="left:945.5px;width:600px;text-align:center;top:1303.4px;font-size:23px;color:#9a9a9a;letter-spacing:-0.5px">GitHub Repository</div>
<div class="t" style="left:1256.5px;width:600px;text-align:center;top:1128.0px;font-size:25px;color:#ececec;letter-spacing:-0.7px">Pipeline1</div>
<div class="t" style="left:1257px;width:600px;text-align:center;top:1168.1px;font-size:22px;color:#9a9a9a;letter-spacing:0.2px">GitHub Actions</div>
<div class="t" style="left:1473px;width:600px;text-align:center;top:1128.0px;font-size:25px;color:#ececec;letter-spacing:-0.5px">MyApp:Latest</div>
<div class="t" style="left:1473px;width:600px;text-align:center;top:1168.1px;font-size:22px;color:#9a9a9a;letter-spacing:-0.33px">Container Image</div>
<div class="t" style="left:1256.5px;width:600px;text-align:center;top:1422.3px;font-size:25px;color:#ececec;letter-spacing:-0.7px">Pipeline1</div>
<div class="t" style="left:1257px;width:600px;text-align:center;top:1462.4px;font-size:22px;color:#9a9a9a;letter-spacing:0.2px">GitHub Actions</div>
<div class="t" style="left:1473px;width:600px;text-align:center;top:1422.3px;font-size:25px;color:#ececec;letter-spacing:-0.5px">MyApp:Latest</div>
<div class="t" style="left:1473px;width:600px;text-align:center;top:1462.4px;font-size:22px;color:#9a9a9a;letter-spacing:-0.33px">Container Image</div>
<div class="t" style="left:1793px;width:600px;text-align:center;top:1264.0px;font-size:25px;color:#ececec;letter-spacing:-0.6px">Cluster1</div>
<div class="t" style="left:1793px;width:600px;text-align:center;top:1305.4px;font-size:22px;color:#9a9a9a;letter-spacing:-0.25px">K8S Cluster</div>
<div class="t" style="left:2022px;width:600px;text-align:center;top:1281.8px;font-size:25px;color:#ececec;letter-spacing:-0.03px">Internet</div>
</body></html>
